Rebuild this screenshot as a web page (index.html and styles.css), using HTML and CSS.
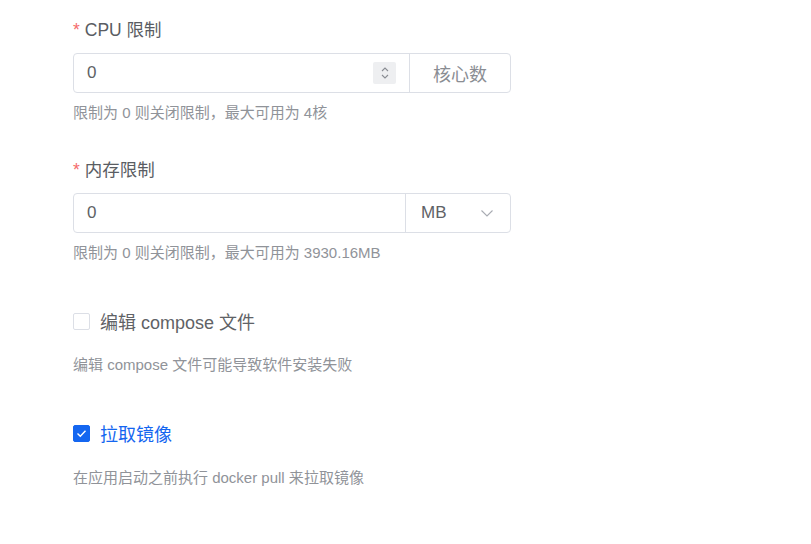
FILE: index.html
```html
<!DOCTYPE html>
<html lang="zh-CN">
<head>
  <meta charset="UTF-8">
  <meta name="viewport" content="width=device-width, initial-scale=1.0">
  <title>资源限制</title>
  <link rel="stylesheet" href="styles.css">
</head>
<body>
  <div class="form">
    <div class="form-item">
      <label class="item-label"><span class="required">*</span>CPU 限制</label>
      <div class="input-group">
        <div class="input-inner cpu">
          <span class="value">0</span>
          <span class="spinner">
            <svg width="10" height="16" viewBox="0 0 10 16" fill="none" stroke="#8a8d93" stroke-width="1.1">
              <path d="M2 6 L5 3 L8 6" />
              <path d="M2 10 L5 13 L8 10" />
            </svg>
          </span>
        </div>
        <div class="append">核心数</div>
      </div>
      <div class="help">限制为 0 则关闭限制，最大可用为 4核</div>
    </div>

    <div class="form-item">
      <label class="item-label"><span class="required">*</span>内存限制</label>
      <div class="input-group">
        <div class="input-inner mem">
          <span class="value">0</span>
        </div>
        <div class="select">
          <span>MB</span>
          <svg width="14" height="14" viewBox="0 0 14 14" fill="none" stroke="#a8abb2" stroke-width="1.1">
            <path d="M1.5 4.5 L7 10 L12.5 4.5" />
          </svg>
        </div>
      </div>
      <div class="help">限制为 0 则关闭限制，最大可用为 3930.16MB</div>
    </div>

    <div class="check-item">
      <div class="check-row">
        <span class="box"></span>
        <span class="check-label">编辑 compose 文件</span>
      </div>
      <div class="help">编辑 compose 文件可能导致软件安装失败</div>
    </div>

    <div class="check-item">
      <div class="check-row checked">
        <span class="box">
          <svg width="11" height="9" viewBox="0 0 11 9" fill="none" stroke="#fff" stroke-width="1.4">
            <path d="M1.5 4.5 L4.3 7.2 L9.5 1.8" />
          </svg>
        </span>
        <span class="check-label">拉取镜像</span>
      </div>
      <div class="help">在应用启动之前执行 docker pull 来拉取镜像</div>
    </div>
  </div>
</body>
</html>
```

FILE: styles.css
```css
body {
  margin: 0;
  background: #ffffff;
  font-family: "Liberation Sans", "Noto Sans CJK SC", sans-serif;
  color: #606266;
}
.form {
  padding: 18px 0 0 73px;
  width: 438px;
}
.form-item {
  margin-bottom: 35px;
}
.item-label {
  display: block;
  font-size: 17.5px;
  line-height: 24px;
  margin-bottom: 11px;
  color: #5a5d63;
}
.required {
  color: #f56c6c;
  margin-right: 5px;
}
.input-group {
  display: flex;
  height: 40px;
  box-sizing: border-box;
  border: 1px solid #dcdfe6;
  border-radius: 4px;
}
.input-inner {
  display: flex;
  align-items: center;
  justify-content: space-between;
  box-sizing: border-box;
  padding: 0 13px;
  font-size: 17px;
  color: #606266;
}
.input-inner.cpu {
  width: 335px;
}
.input-inner.mem {
  width: 331px;
}
.spinner {
  width: 23px;
  height: 22px;
  background: #eeeff1;
  display: flex;
  align-items: center;
  justify-content: center;
  border-radius: 2px;
}
.append {
  flex: 1;
  border-left: 1px solid #dcdfe6;
  display: flex;
  align-items: center;
  justify-content: center;
  font-size: 18px;
  color: #8a8d93;
}
.select {
  flex: 1;
  border-left: 1px solid #dcdfe6;
  display: flex;
  align-items: center;
  justify-content: space-between;
  padding: 0 16px 0 15px;
  font-size: 17px;
  color: #606266;
}
.help {
  margin-top: 10px;
  font-size: 15px;
  line-height: 20px;
  color: #909399;
}
.check-item {
  margin-top: 46px;
  margin-bottom: 46px;
}
.check-row {
  display: flex;
  align-items: center;
  height: 24px;
}
.box {
  width: 17px;
  height: 17px;
  box-sizing: border-box;
  border: 1px solid #dcdfe6;
  border-radius: 2px;
  margin-right: 10px;
  display: flex;
  align-items: center;
  justify-content: center;
}
.check-label {
  font-size: 18px;
  color: #606266;
}
.check-row.checked .box {
  background: #1466f0;
  border-color: #1466f0;
}
.check-row.checked .check-label {
  color: #1466f0;
}
.check-item .help {
  margin-top: 22px;
}
.check-item + .check-item .help {
  margin-top: 23px;
}
```
